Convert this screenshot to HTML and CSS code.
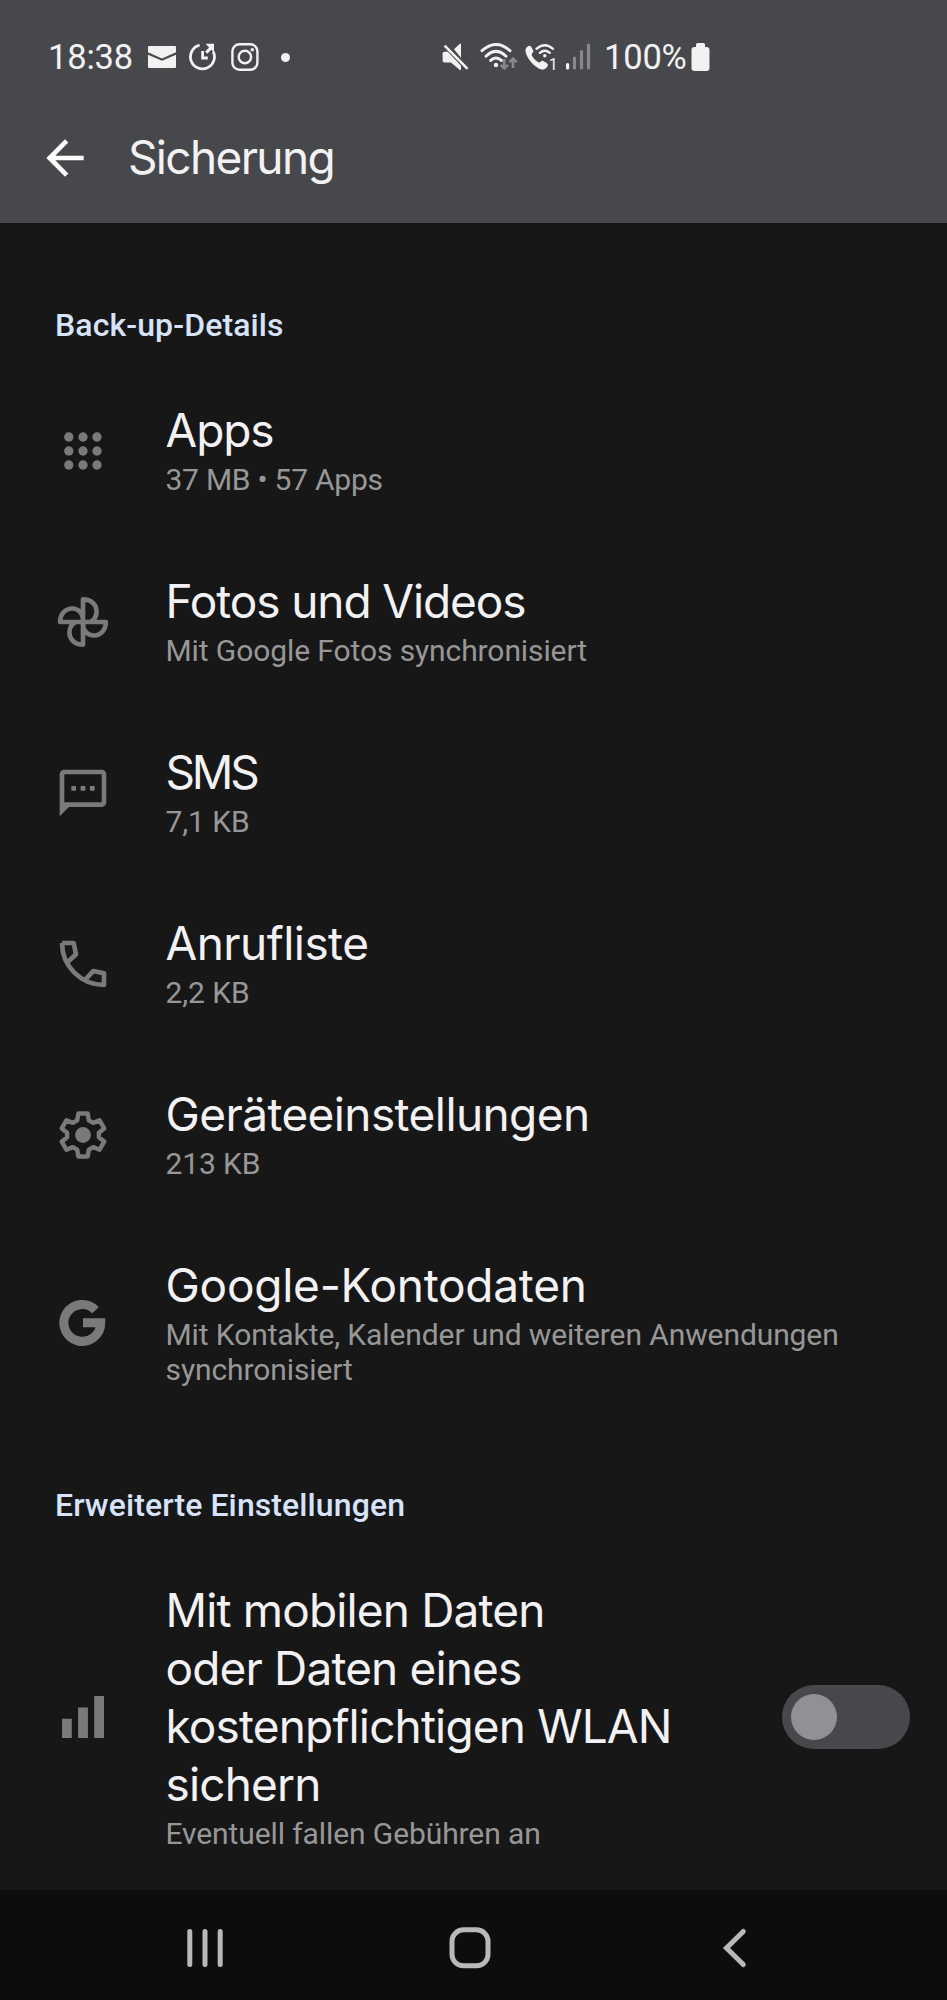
FILE: index.html
```
<!DOCTYPE html>
<html lang="de">
<head>
<meta charset="utf-8">
<title>Sicherung</title>
<link rel="stylesheet" href="styles.css">
</head>
<body>
<div class="screen">
  <header class="top">
    <div class="status">
      <span class="time">18:38</span>
      <svg class="st-mail" width="28" height="23" viewBox="0 0 28 23"><path fill="#f2f2f3" d="M1 0h26a1 1 0 0 1 1 1v5.2l-14 6.3L0 6.2V1a1 1 0 0 1 1-1zM0 8.7l14 6.1 14-6.1V21a1 1 0 0 1-1 1H1a1 1 0 0 1-1-1z"/></svg>
      <svg class="st-clock" width="28" height="28" viewBox="0 0 28 28"><g fill="none" stroke="#f2f2f3" stroke-width="2.8"><path d="M10.6 2.2A12 12 0 1 0 24.2 8.5"/><path d="M13.6 8v7h5.2"/></g><path fill="#f2f2f3" d="M16.500.8H25v8.700l-2.700-2.700-4 4-2.200-2.200 4-4z"/></svg>
      <svg class="st-insta" width="28" height="28" viewBox="0 0 28 28"><g fill="none" stroke="#f2f2f3" stroke-width="2.4"><rect x="1.4" y="1.3" width="25" height="25.4" rx="7"/><circle cx="13.9" cy="14" r="6.2"/></g><circle cx="21.3" cy="6.8" r="1.8" fill="#f2f2f3"/></svg>
      <span class="dot"></span>
      <svg class="st-mute" width="28" height="28" viewBox="0 0 28 28"><path fill="#f2f2f3" d="M2.4 8.8h3.4L19 22.8V27h-1.2L9 19.6H2.4A1.8 1.8 0 0 1 .6 17.8v-7.2a1.8 1.8 0 0 1 1.8-1.8zM12 6.2 17.8.7H19v14z"/><path d="m2.6 2.6 23 23.2" stroke="#f2f2f3" stroke-width="2.6"/></svg>
      <svg class="st-wifi" width="38" height="28" viewBox="0 0 38 28"><g fill="none" stroke="#f2f2f3" stroke-width="2.9" stroke-linecap="round"><path d="M2 7.700Q16 -4.800 30 7.700M6 13.200Q16 3.600 26 13.200"/><path d="M10.600 17.400Q16 12.400 21.400 17.400"/></g><circle cx="16" cy="22" r="2.2" fill="#f2f2f3"/><g fill="none" stroke="#87888b" stroke-width="2.600"><path d="M24.300 16v9.500M20.600 21.800l3.700 3.700 3.700-3.700M33 25V15.600M29.300 19.200l3.700-3.700 3.700 3.700"/></g></svg>
      <svg class="st-call" width="35" height="36" viewBox="0 -4 35 36"><path fill="#f2f2f3" d="M.6 6.300C.9 4.500 3 2.600 4.900 2.700c1 .1 3.500 4.700 3.500 5.800 0 1.100-1.900 2-1.800 3.100.3 2.300 5.300 7.600 7.400 7.900 1.200.2 2-1.700 3.200-1.800 1.100 0 5.600 2.600 5.700 3.700.1 2.400-2.400 5.200-5.300 5.200C11.200 26.500-.4 14 .6 6.300z"/><g fill="none" stroke="#f2f2f3" stroke-width="2.400" stroke-linecap="round"><path d="M11.500 5.800Q19.800-1.300 28 5.800M14.800 9.800Q19.800 5.600 24.800 9.800"/></g><circle cx="19.800" cy="12.800" r="1.700" fill="#f2f2f3"/><text class="sim" x="23.800" y="26.500">1</text></svg>
      <svg class="st-signal" width="25" height="28" viewBox="0 0 25 28"><rect y="20" width="3.200" height="6.500" rx="1.500" fill="#f2f2f3"/><g fill="#87888b"><rect x="6.900" y="13.500" width="3.200" height="13" rx="1.500"/><rect x="13.900" y="7" width="3.200" height="19.500" rx="1.500"/><rect x="20.900" y="0.500" width="3.200" height="26" rx="1.500"/></g></svg>
      <span class="percent">100%</span>
      <svg class="st-battery" width="19" height="29" viewBox="0 0 19 29"><path fill="#f2f2f3" d="M6.500 0h6A1.500 1.500 0 0 1 14 1.500V4h1.500a3 3 0 0 1 3 3v18a3 3 0 0 1-3 3h-12a3 3 0 0 1-3-3V7a3 3 0 0 1 3-3H5V1.500A1.500 1.500 0 0 1 6.500 0z"/></svg>
    </div>
    <div class="appbar">
      <svg width="56" height="56" viewBox="0 0 24 24"><path fill="#fff" d="M20 11H7.830l5.590-5.590L12 4l-8 8 8 8 1.410-1.410L7.830 13H20v-2z"/></svg>
      <h1 class="title page-title">Sicherung</h1>
    </div>
  </header>

  <main class="content">
    <h2 class="section">Back-up-Details</h2>

    <div class="row">
      <svg class="icon" viewBox="0 0 24 24"><g><circle cx="5.900" cy="6" r="2"/><circle cx="12" cy="6" r="2"/><circle cx="18" cy="6" r="2"/><circle cx="5.900" cy="12" r="2"/><circle cx="12" cy="12" r="2"/><circle cx="18" cy="12" r="2"/><circle cx="5.900" cy="18" r="2"/><circle cx="12" cy="18" r="2"/><circle cx="18" cy="18" r="2"/></g></svg>
      <div class="text"><div class="title t-apps">Apps</div><div class="sub sub-apps">37 MB • 57 Apps</div></div>
    </div>

    <div class="row">
      <svg class="icon" viewBox="0 0 24 24"><path fill="none" stroke="#7a7a7a" stroke-width="2" stroke-linejoin="round" d="M12 12V2.300c3.400 0 5.800 2.200 5.800 5.200 0 2.100-1.100 3.700-2.800 4.500M12 12h9.800c0 3.400-2.200 5.800-5.200 5.800-2.500 0-4.600-2-4.600-4.600M12 12v9.700c-3.400 0-5.800-2.200-5.800-5.200 0-2.100 1.100-3.700 2.800-4.500M12 12H2.200c0-3.400 2.200-5.800 5.200-5.800 2.500 0 4.600 2 4.600 4.600"/></svg>
      <div class="text"><div class="title t-fotos">Fotos und Videos</div><div class="sub">Mit Google Fotos synchronisiert</div></div>
    </div>

    <div class="row">
      <svg class="icon" viewBox="0 0 24 24"><path d="M20 2H4c-1.100 0-2 .9-2 2v18l4-4h14c1.100 0 2-.9 2-2V4c0-1.100-.9-2-2-2zm0 14H4V4h16v12zM7 9h2v2H7zm4 0h2v2h-2zm4 0h2v2h-2z"/></svg>
      <div class="text"><div class="title t-sms">SMS</div><div class="sub">7,1 KB</div></div>
    </div>

    <div class="row">
      <svg class="icon" viewBox="0 0 24 24"><path fill="none" stroke="#7a7a7a" stroke-width="2" stroke-linejoin="round" d="M3 3h5l1 4.800-3.600 3.400M3 3c0 9.900 8.100 18 18 18v-5l-4.600-1-3.300 3.600"/></svg>
      <div class="text"><div class="title t-anruf">Anrufliste</div><div class="sub">2,2 KB</div></div>
    </div>

    <div class="row">
      <svg class="icon" viewBox="0 0 24 24"><path fill="none" stroke="#7a7a7a" stroke-width="1.900" stroke-linejoin="round" d="M10 2.800h4l.5 2.900 1.900 1.100 2.700-1.100 2 3.500-2.300 1.800v2l2.300 1.800-2 3.500-2.700-1.100-1.900 1.100-.5 2.900h-4l-.5-2.900-1.900-1.100-2.700 1.100-2-3.500L5.200 13v-2L2.900 9.200l2-3.500 2.700 1.100 1.900-1.100z"/><circle cx="12" cy="12" r="3.400"/></svg>
      <div class="text"><div class="title t-geraet">Geräteeinstellungen</div><div class="sub">213 KB</div></div>
    </div>

    <div class="row">
      <svg class="icon" viewBox="0 0 24 24"><path fill="none" stroke="#7a7a7a" stroke-width="3.900" d="M17.400 6.500A7.900 7.900 0 1 0 19.600 11.900H12"/></svg>
      <div class="text"><div class="title t-google">Google-Kontodaten</div><div class="sub">Mit Kontakte, Kalender und weiteren Anwendungen<br>synchronisiert</div></div>
    </div>

    <h2 class="section section-second">Erweiterte Einstellungen</h2>

    <div class="row">
      <svg class="icon" viewBox="0 0 24 24"><path d="M3 12.800h4.200v8.200H3zM9.900 7.900h4.200V21H9.900zM16.800 3H21v18h-4.200z"/></svg>
      <div class="text"><div class="title t-mobil">Mit mobilen Daten<br>oder Daten eines<br>kostenpflichtigen WLAN<br>sichern</div><div class="sub">Eventuell fallen Gebühren an</div></div>
      <div class="switch"><span class="knob"></span></div>
    </div>
  </main>

  <nav class="navbar">
    <svg width="40" height="44" viewBox="0 0 40 44"><path stroke="#b9b9b9" stroke-width="5" stroke-linecap="round" d="M4.800 5.500v33M20 5.500v33M35.200 5.500v33"/></svg>
    <svg width="44" height="44" viewBox="0 0 44 44"><rect x="4" y="3.800" width="36" height="36" rx="11.500" fill="none" stroke="#b9b9b9" stroke-width="5"/></svg>
    <svg width="44" height="44" viewBox="0 0 44 44"><path fill="none" stroke="#b9b9b9" stroke-width="5" stroke-linecap="round" stroke-linejoin="miter" d="M30.300 5.500 13.500 22l16.800 16.500"/></svg>
  </nav>
</div>
</body>
</html>
```
FILE: styles.css
```
* { box-sizing: border-box; }

body {
  margin: 0;
  background: #171717;
  color: #f2f2f5;
  font-family: Roboto, "Liberation Sans", sans-serif;
}

.screen {
  display: flex;
  flex-direction: column;
  width: 947px;
  height: 2000px;
  overflow: hidden;
}

.top { flex: none; height: 223px; background: #47484b; }

.status {
  display: flex;
  align-items: center;
  height: 93px;
  padding: 21px 0 0 48px;
  font-size: 34.5px;
  line-height: 40px;
  color: #f2f2f3;
}
.status > * { flex: none; }
.time { width: 100px; letter-spacing: -.2px; }
.percent { width: 87px; margin-left: 13px; letter-spacing: -.2px; }
.st-clock { margin-left: 12.500px; }
.st-insta { margin-left: 14px; }
.dot { width: 9px; height: 9px; margin-left: 22px; border-radius: 50%; background: #f2f2f3; }
.st-mute { margin-left: 152px; }
.st-wifi { margin-left: 10px; }
.st-call { margin-left: 7px; }
.st-signal { margin-left: 6.500px; }
.sim { font: 16px Roboto, sans-serif; fill: #f2f2f3; }

.appbar {
  display: flex;
  align-items: center;
  gap: 35px;
  height: 130px;
  padding-left: 37px;
}

.title {
  font-family: Inter, Roboto, sans-serif;
  font-weight: 400;
  font-size: 46px;
  line-height: 58px;
  white-space: nowrap;
}
.page-title { margin: -2px 0 0; letter-spacing: -1.650px; }
.t-apps { letter-spacing: -1.100px; }
.t-fotos { letter-spacing: -1.100px; }
.t-sms { letter-spacing: -3.200px; }
.t-anruf { letter-spacing: -.55px; }
.t-geraet { letter-spacing: -.6px; }
.t-google { letter-spacing: -.25px; }
.t-mobil { letter-spacing: -.85px; }

.content { flex: 1; padding-top: 82px; }

.section {
  height: 60px;
  margin: 0;
  padding: 1px 0 0 55px;
  font-size: 32px;
  font-weight: 500;
  line-height: 38px;
  letter-spacing: .1px;
  color: #d6e3fb;
}
.section-second { height: 118.500px; padding-top: 60px; }

.row {
  display: flex;
  align-items: center;
  padding: 39px 37px 39px 55px;
}
.icon { flex: none; width: 56px; height: 56px; fill: #7a7a7a; }
.text { flex: 1; margin-left: 54.500px; }
.text .title { margin: -3px 0 3px; }
.sub {
  font-size: 30px;
  line-height: 35px;
  letter-spacing: -.1px;
  white-space: nowrap;
  color: #979797;
}
.sub-apps { letter-spacing: -.25px; }

.switch {
  display: flex;
  align-items: center;
  width: 128px;
  height: 64px;
  padding-left: 9px;
  border-radius: 32px;
  background: #47484b;
}
.knob { width: 46px; height: 46px; border-radius: 50%; background: #919095; }

.navbar {
  display: grid;
  grid-template-columns: repeat(3, 265px);
  place-items: center;
  flex: none;
  height: 111px;
  padding: 6px 0 0 72px;
  background: #0d0d0d;
}
```
